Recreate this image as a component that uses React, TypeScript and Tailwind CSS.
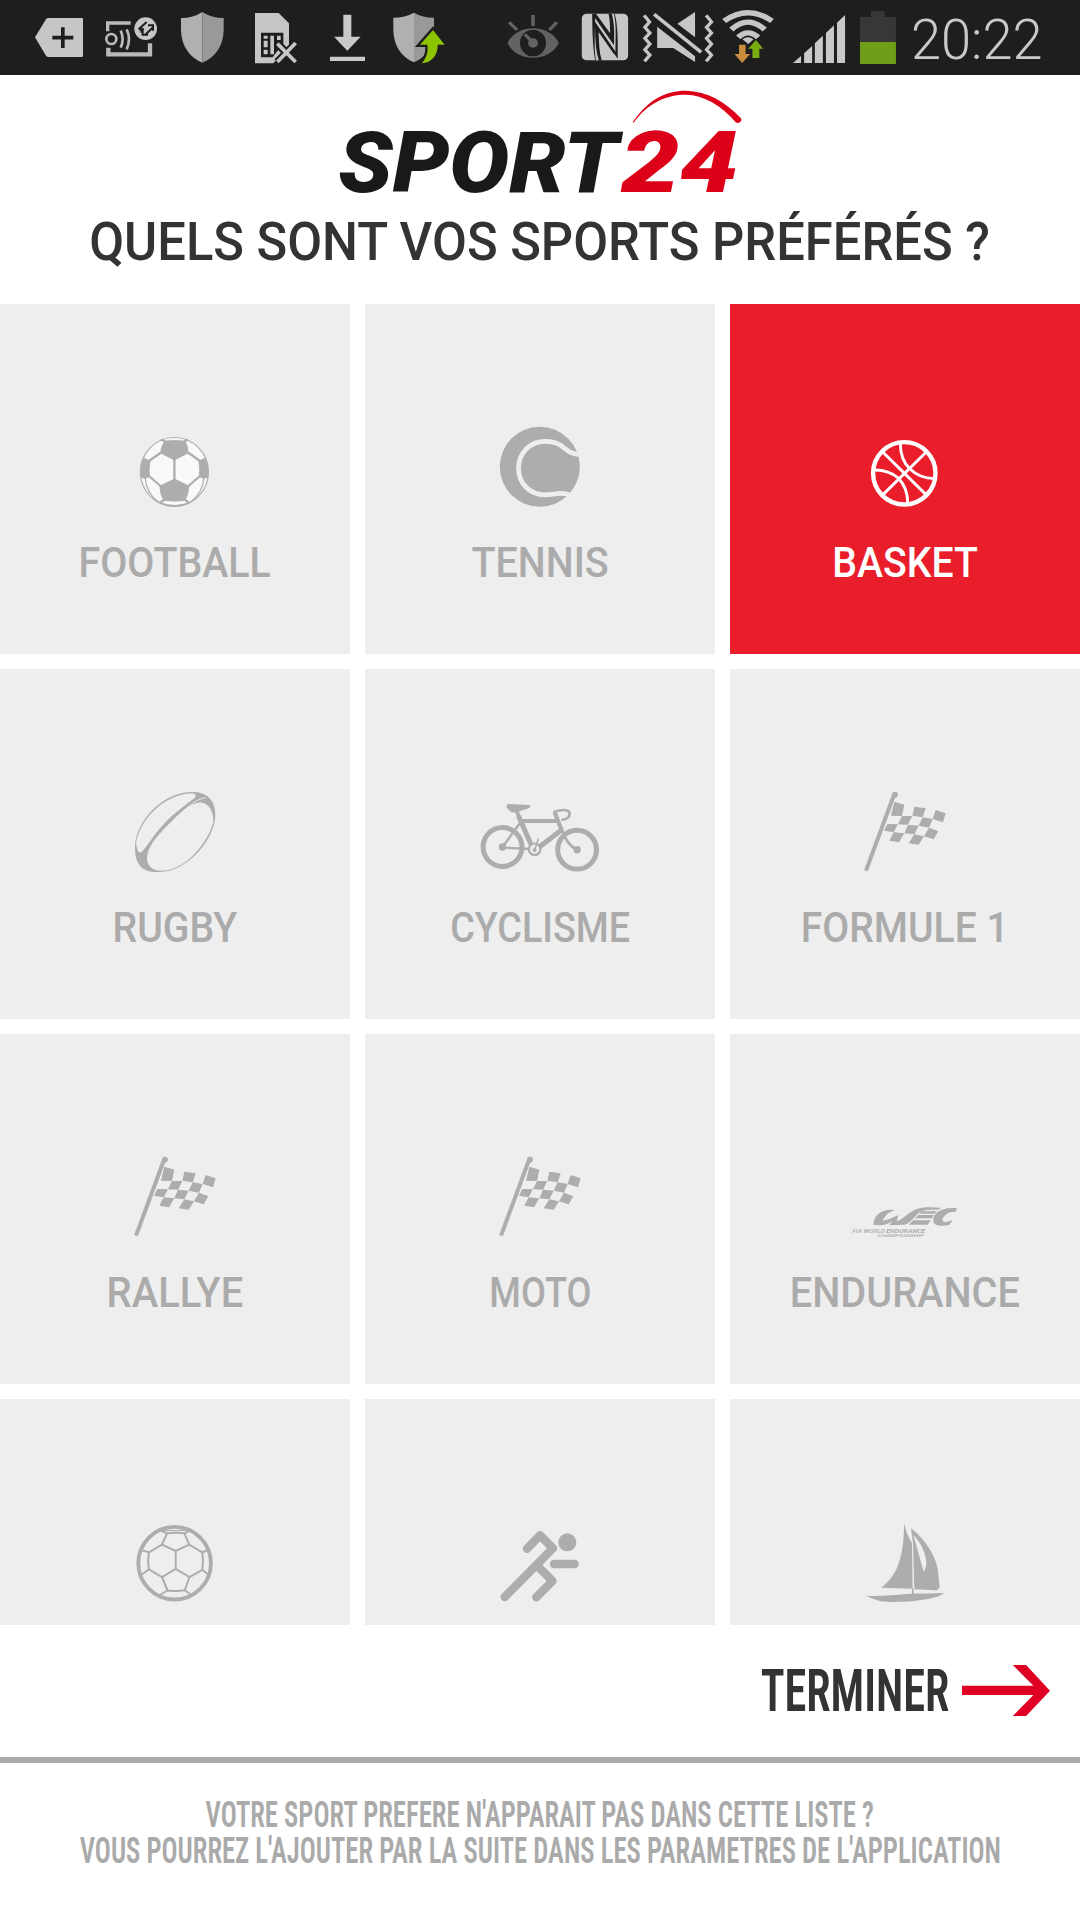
import React from 'react';

/* ---------- Status bar icons ---------- */

function LeftIcon({ x, w, children }: { x: number; w: number; children: React.ReactNode }) {
  return (
    <svg className="h-[75px] shrink-0" width={w} height={75} viewBox={`${x * 3} 0 ${w * 3} 225`}>
      {children}
    </svg>
  );
}

const RATIO = 600 / 1568;

function RightIcon({ x, w, children }: { x: number; w: number; children: React.ReactNode }) {
  return (
    <svg
      className="h-[75px] shrink-0"
      width={w}
      height={75}
      viewBox={`${(x - 480) / RATIO} 0 ${w / RATIO} 225`}
      preserveAspectRatio="none"
    >
      {children}
    </svg>
  );
}

function StatusBar() {
  return (
    <header className="flex h-[75px] items-center bg-[#1e1e1e] pl-[28px]">
      <LeftIcon x={28} w={66}>
        <path d="M105 112 L138 58 Q141 54 146 54 H245 Q249 54 249 58 V167 Q249 171 245 171 H146 Q141 171 138 167 Z" fill="#c6c6c6" />
        <path d="M157 113 H220 M188.500 82 V144" stroke="#1e1e1e" strokeWidth="11" />
      </LeftIcon>
      <LeftIcon x={94} w={75}>
        <g fill="none" stroke="#b9b9b9">
          <path d="M323 94 V69 H392" strokeWidth="10" />
          <path d="M325 143 V163 H450 V130" strokeWidth="13" />
          <circle cx="334" cy="117" r="15" strokeWidth="8" />
          <path d="M362 92 Q374 117 362 143 M380 88 Q394 117 380 148" strokeWidth="8" />
        </g>
        <circle cx="437" cy="86" r="34" fill="#c6c6c6" />
        <g stroke="#1e1e1e" strokeWidth="6" fill="none">
          <path d="M416 88 L440 66 M424 98 V82 M416 88 H432" />
          <path d="M434 106 L458 83 M444 76 H459 V92 M428 88 V104 H444" />
        </g>
      </LeftIcon>
      <LeftIcon x={169} w={70}>
        <path d="M607 36 Q580 54 543 54 V90 C544 140 570 172 607 188 Z" fill="#b0b0b0" />
        <path d="M607 36 Q635 54 671 54 V90 C670 140 645 172 607 188 Z" fill="#999999" />
      </LeftIcon>
      <LeftIcon x={239} w={74}>
        <path d="M765 39 H836 L867 70 V136 L820 190 H765 Z" fill="#c6c6c6" />
        <path d="M783 98 H850 V130 L818 172 H783 Z" fill="#1e1e1e" />
        <path d="M791 107 H803 V116 H791 Z M791 122 H803 V142 H791 Z M791 149 H803 V163 H791 Z M811 107 H822 V163 H811 Z M831 107 H842 V120 H831 Z" fill="#c6c6c6" />
        <path d="M832 131 L887 186 M887 131 L832 186" stroke="#1e1e1e" strokeWidth="24" />
        <path d="M832 131 L887 186 M887 129 L832 186" stroke="#c6c6c6" strokeWidth="11" />
      </LeftIcon>
      <LeftIcon x={313} w={67}>
        <path d="M1030 44 H1054 V110 H1082 L1042 152 L1002 110 H1030 Z M990 170 H1095 V183 H990 Z" fill="#c9c9c9" />
      </LeftIcon>
      <LeftIcon x={380} w={120}>
        <path d="M1242 38 Q1215 53 1180 53 V90 C1181 140 1206 172 1242 187 Z" fill="#b0b0b0" />
        <path d="M1242 38 Q1268 53 1302 53 V90 C1301 140 1278 172 1242 187 Z" fill="#999999" />
        <path
          d="M1299 90 L1334 134 H1313 C1314 164 1296 188 1265 190 C1281 172 1285 153 1282 134 H1260 Z"
          fill="#8cc400"
          stroke="#1e1e1e"
          strokeWidth="14"
          paintOrder="stroke"
        />
      </LeftIcon>
      <RightIcon x={500} w={70}>
        <path d="M72 129 C95 70 182 70 206 129 C182 188 95 188 72 129 Z" fill="#626262" />
        <ellipse cx="138.500" cy="129" rx="34" ry="40" fill="#1e1e1e" />
        <ellipse cx="138.500" cy="129" rx="13" ry="14" fill="#626262" />
        <path d="M117 103 L138 127 M138.500 45 V78 M76 67 L97 90 M201 67 L181 90" stroke="#626262" strokeWidth="9" />
      </RightIcon>
      <RightIcon x={570} w={66}>
        <rect x="266" y="41" width="121" height="140" rx="13" fill="#c6c6c6" />
        <path
          d="M293 41 H303 L340 100 C340 75 339 55 336 41 H352 C361 75 360 130 360 176 L310 96 C311 130 312 160 318 181 H301 C293 130 294 75 293 41 Z"
          fill="#1e1e1e"
        />
        <path d="M301 48 L347 124 C348 90 347 65 341 41 H350 C357 75 354 120 354 160 L304 78 C304 120 306 155 312 181 H303 C297 140 301 90 301 48 Z" fill="#c6c6c6" />
        <path d="M301 48 L347 124 C348 90 347 65 341 41 M353 160 L304 78 C304 120 306 155 314 181" fill="none" stroke="#1e1e1e" strokeWidth="7" />
      </RightIcon>
      <RightIcon x={636} w={80}>
        <g fill="none" stroke="#c6c6c6" strokeWidth="9">
          <path d="M429 46 L443 66 L431 82 L444 99 L431 115 L444 132 L431 149 L444 165 L430 184" />
          <path d="M591 46 L605 66 L592 82 L605 99 L592 115 L605 132 L592 149 L605 165 L591 184" />
        </g>
        <path d="M516 71 L562 36 V112 Z M463 80 L562 169 V186 L505 144 H463 Z" fill="#c6c6c6" />
        <path d="M455 43 L578 157" stroke="#c6c6c6" strokeWidth="10" />
      </RightIcon>
      <RightIcon x={716} w={68}>
        <g fill="none" stroke="#c6c6c6" strokeWidth="16">
          <path d="M638 63 Q700 13 763 63" />
          <path d="M657 89 Q700 44 744 89" />
          <path d="M675 112 Q700 85 727 112" />
        </g>
        <path d="M686 118 Q700 106 715 118 L701 132 Z" fill="#c6c6c6" />
        <path d="M677 134 H694 V162 H706 L685 189 L665 162 H677 Z" fill="#c98f3f" />
        <path d="M721 120 L740 146 H730 V174 H712 V146 H701 Z" fill="#78ad12" />
      </RightIcon>
      <RightIcon x={784} w={68}>
        <path
          d="M818 189 L839 168 V189 Z M847 160 L868 138 V189 H847 Z M875 130 L896 107 V189 H875 Z M904 99 L925 76 V189 H904 Z M933 68 L954 45 V189 H933 Z"
          fill="#c9c9c9"
        />
      </RightIcon>
      <RightIcon x={852} w={58}>
        <path d="M1022 33 H1058 V51 H1087 V126 H993 V51 H1022 Z" fill="#373737" />
        <path d="M993 126 H1087 V192 H993 Z" fill="#6f9f19" />
      </RightIcon>
      <span className="ml-[1px] mt-[5px] inline-block origin-left scale-x-[0.985] font-['Roboto',sans-serif] text-[55px] font-[350] leading-none text-[#c9c9c9]">
        20:22
      </span>
    </header>
  );
}

/* ---------- Brand ---------- */

function Logo() {
  return (
    <svg className="h-[130px] w-[440px] overflow-visible" viewBox="0 0 1320 390" fontFamily="Roboto, sans-serif" fontWeight="900" fontStyle="italic" fontSize="257">
      <text x="55" y="337" textLength="840" lengthAdjust="spacingAndGlyphs" fill="#1a181b">
        SPORT
      </text>
      <text x="903" y="337" textLength="352" lengthAdjust="spacingAndGlyphs" fill="#dd0019">
        24
      </text>
      <path
        d="M938 127 C985 57 1040 31 1100 32 C1160 34 1215 63 1263 115 C1268 124 1256 133 1247 127 C1205 76 1150 45 1098 44 C1040 44 985 67 941 128 Z"
        fill="#dd0019"
      />
    </svg>
  );
}

/* ---------- Sport pictograms ---------- */

function Pictogram({ children }: { children: React.ReactNode }) {
  return (
    <svg className="h-[84px] w-[130px] shrink-0" viewBox="110 120 130 84">
      {children}
    </svg>
  );
}

const INK = '#adadad';
const TILE = '#eeeeee';

function Football() {
  return (
    <Pictogram>
      <ellipse cx="174.400" cy="168" rx="34" ry="34.500" fill="#f9f9f9" stroke={INK} strokeWidth="1.200" />
      <g fill={INK} stroke={INK} strokeWidth="0.800">
        <path d="M164.900 137 Q174.400 136 184.800 137 Q188 142 188.200 149 L174.400 156 L160.600 149 Q161 142 164.900 137 Z" />
        <path d="M174.400 175 L189 182 Q188.500 190 185.100 196.300 Q174.400 198 163.700 196.300 Q160 190 159.900 182 Z" />
        <path d="M144.200 154.300 L150 157 Q148.500 165 149.500 172.700 L144.500 174.500 L140.700 173 Q139.500 163 144.200 154.300 Z" />
        <path d="M204.600 154.300 L198.800 157 Q200.300 165 199.300 172.700 L204.300 174.500 L208.100 173 Q209.300 163 204.600 154.300 Z" />
      </g>
      <g fill="none" stroke={INK} strokeWidth="2.300">
        <path d="M174.400 155 V176 M161 148.500 L149 157 M188 148.500 L200 157 M149 172 L160.500 182 M200 172 L188.500 182" />
        <path d="M165 137.500 L161 135.500 M184.500 137.500 L188 135.500 M164 196 L159.500 199 M185 196 L189.500 199" />
        <path d="M145 173 Q146 189 159 198.500 M204 173 Q203 189 190 198.500" strokeWidth="1.200" />
        <path d="M160 199 Q174.400 204.500 189 199" strokeWidth="1.400" />
      </g>
    </Pictogram>
  );
}

function Tennis() {
  return (
    <Pictogram>
      <circle cx="174.800" cy="162.700" r="40" fill={INK} />
      <path
        d="M218 150.600 C206 151 202 146 196 141.500 C191 138.500 186 137.400 180 137.400 C165 137.400 153.500 149 153.500 164.300 C153.500 179.500 165 190.800 180 190.800 C188 190.800 194 188.200 202 190 L210 193"
        fill="none"
        stroke={TILE}
        strokeWidth="4.800"
      />
    </Pictogram>
  );
}

function Basket() {
  return (
    <Pictogram>
      <g fill="none" stroke="#fff" strokeWidth="2.900">
        <circle cx="174.300" cy="169.300" r="31.200" strokeWidth="4.400" />
        <path d="M153 148.300 L196 190.600 M196 148.300 L153 190.600" />
        <path d="M170.300 139.500 Q170.500 156 179.700 164.700 Q190 174.500 204 174.600" />
        <path d="M145 166 Q159 166 168.500 174.200 Q177.700 184 177.700 199" />
      </g>
    </Pictogram>
  );
}

function Rugby() {
  return (
    <Pictogram>
      <path
        fillRule="evenodd"
        fill={INK}
        d="M190.700 123 C206 122.500 215.300 130 215.300 146 C215.300 170 187 203 160 203 C143 204 135 197 135 178 C135 155 160 124 190.700 123 Z
           M191.500 124.300 C197 125 196.500 127.500 194 129.500 C183 138 170 147 158.500 161 C151 170 143 184 140 183.500 C137.500 183 136 177 136.200 173 C140 152 162 126 191.500 124.300 Z
           M201 133.500 C190 132.500 176 148 166 158 C156 168 147 179 147 189 C147 197 152 201.500 161 201.800 C171 202 183 196.500 193 186.500 C204 175.500 212 161 213.400 152 C213.300 141 208 134 201 133.500 Z"
      />
      <path d="M206 128.500 C196 130 189 137 180 145" fill="none" stroke={TILE} strokeWidth="0.900" />
    </Pictogram>
  );
}

function Bicycle() {
  return (
    <Pictogram>
      <g fill="none" stroke={INK}>
        <circle cx="137.500" cy="178" r="19.400" strokeWidth="5" />
        <circle cx="212.100" cy="180.700" r="19.400" strokeWidth="5" />
        <path d="M151.400 141 L154 148" strokeWidth="3.800" />
        <path d="M153.500 147 L167 177.500 M196.500 161 L173 179" strokeWidth="5" />
        <path d="M156 152 H194" strokeWidth="4.200" />
        <path d="M189.500 143 L197 162" strokeWidth="4.200" />
        <path d="M197 161 Q202 176 211.500 180.500 M188.500 143 Q202 139 204.500 143.500 Q205.500 150 196.500 151" strokeWidth="2.600" />
        <path d="M137.500 178 L155 154 M137.500 178.500 L165 180" strokeWidth="2.300" />
      </g>
      <circle cx="169.600" cy="180.300" r="5.800" fill={TILE} stroke={INK} strokeWidth="2.200" />
      <path d="M169.600 181 L173.600 169.500" stroke={INK} strokeWidth="1.600" />
      <g fill={INK}>
        <circle cx="169.600" cy="181" r="2" />
        <circle cx="137.500" cy="178" r="3.700" />
        <circle cx="212.100" cy="180.700" r="3.700" />
        <path d="M143 135 L164.500 136 Q165.800 138 164 139.300 L152.500 142.700 Q148 144 146 143 L141.800 139 Q141 136 143 135 Z" />
      </g>
    </Pictogram>
  );
}

function Flag() {
  return (
    <Pictogram>
      <g transform="translate(50 101) scale(0.33333)" fill={INK}>
        <path d="M343 72 L258 302" stroke={INK} strokeWidth="12" />
        <circle cx="345" cy="74" r="8.500" />
        <path d="M343 95 L373 104 L366 138 L333 137 Z M403 110 L437 115 L428 142 L397 137 Z M467 120 L497 130 L489 157 L458 147 Z" />
        <path d="M366 138 H397 L384 164 L354 163 Z M428 142 L458 147 L447 173 L416 167 Z" />
        <path d="M322 162 L354 163 L341 187 L312 182 Z M384 164 L416 167 L403 193 L373 190 Z M447 173 L475 184 L461 208 L432 199 Z" />
        <path d="M341 187 L373 190 L357 217 L328 212 Z M403 193 L432 199 L416 224 L386 220 Z" />
      </g>
    </Pictogram>
  );
}

function Wec() {
  return (
    <Pictogram>
      <g transform="translate(50 146) scale(0.33333)" fill={INK}>
        <path d="M280 134 C282 105 305 84 346 90 C325 94 312 112 308 122 C320 122 338 112 357 105 C352 112 350 119 351 124 C370 116 385 98 405 89 C425 80 455 81 484 83 L475 89 C450 89 430 88 416 99 C400 112 393 130 372 134 L328 136 L336 124 C325 132 312 136 300 136 Z" />
        <path d="M425 94 H472 L463 101 H418 Z M415 105 H462 L455 115 H405 Z M400 121 H452 L443 134 H386 Z" />
        <path d="M531 85 L527 95 C510 94 498 100 490 112 C483 124 492 128 500 126 C508 124 512 121 518 121 L507 135 C490 138 465 140 460 125 C457 103 480 80 531 85 Z" />
        <g fontFamily="Roboto, sans-serif" fontStyle="italic" fontSize="14">
          <text x="217" y="158" textLength="98" lengthAdjust="spacingAndGlyphs" fontWeight="500">FIA WORLD</text>
          <text x="319" y="158" textLength="117" lengthAdjust="spacingAndGlyphs" fontWeight="700">ENDURANCE</text>
          <text x="292" y="171" textLength="140" lengthAdjust="spacingAndGlyphs" fontSize="11" fontWeight="500">CHAMPIONSHIP</text>
        </g>
      </g>
    </Pictogram>
  );
}

function Handball() {
  return (
    <Pictogram>
      <g fill="none" stroke={INK} strokeWidth="2">
        <circle cx="174.600" cy="164.200" r="36.300" strokeWidth="3.800" />
        <path d="M175.700 152 V170 M175.700 152 L162 145.700 L148.900 153.300 Q147.300 162 148.900 170.300 L162 178 L175.700 170 L189.500 178 L202.300 170.800 Q203.800 162 202.300 153.300 L189.200 145.700 Z" />
        <path d="M162 145.700 L167.100 134.300 Q175.700 133 184.400 134.300 L189.200 145.700 M162 178 L167.500 191.500 Q175.700 192.800 184.700 191.300 L189.500 178" />
        <path d="M167.100 134.300 L160 131.500 M184.400 134.300 L191 131 M148.900 153.300 L141 151 M202.300 153.300 L209 150.500 M148.900 170.500 L141 176 M202.300 170.800 L209 176.500 M167.500 191.500 L158 197 M184.700 191.300 L192 196.500" />
        <path d="M163 131.500 H188" strokeWidth="1" />
      </g>
    </Pictogram>
  );
}

function Runner() {
  return (
    <Pictogram>
      <circle cx="202.300" cy="143.300" r="9" fill={INK} />
      <g fill="none" stroke={INK} strokeWidth="8.400" strokeLinecap="round" strokeLinejoin="round">
        <path d="M189 165 H209.600" />
        <path d="M162 149.700 L175.100 136.300 L187.900 149.300 L139.700 198" />
        <path d="M173 167.500 L187.500 182 L171.300 198.300" />
      </g>
    </Pictogram>
  );
}

function Sailboat() {
  return (
    <Pictogram>
      <g transform="translate(10 101) scale(0.33333)" fill={INK}>
        <path d="M492 70 Q500 105 516 130 L518 266 L424 263 C475 225 492 165 492 70 Z" />
        <path
          fillRule="evenodd"
          d="M513 85 C570 130 597 190 596 235 L599 258 C598 268 592 271 585 271 L523 268 L519 130 Z M520 104 C545 130 558 165 559 185 C559 200 555 208 551 216 Z"
        />
        <path d="M516 266 H521 V284 H516 Z" />
        <path d="M378 287 C420 290 460 285 500 282 C540 280 580 280 612 279 C600 290 570 298 520 303 C470 307 425 307 410 300 Q390 294 378 287 Z" />
      </g>
    </Pictogram>
  );
}

/* ---------- Grid ---------- */

type Sport = { name: string; fit: string; Icon: () => React.ReactElement; active?: boolean };

const SPORTS: Sport[] = [
  { name: 'FOOTBALL', fit: 'scale-x-[0.937]', Icon: Football },
  { name: 'TENNIS', fit: 'scale-x-[0.938]', Icon: Tennis },
  { name: 'BASKET', fit: 'scale-x-[0.933]', Icon: Basket, active: true },
  { name: 'RUGBY', fit: 'scale-x-[0.933]', Icon: Rugby },
  { name: 'CYCLISME', fit: 'scale-x-[0.898]', Icon: Bicycle },
  { name: 'FORMULE 1', fit: 'scale-x-[0.931]', Icon: Flag },
  { name: 'RALLYE', fit: 'scale-x-[0.95]', Icon: Flag },
  { name: 'MOTO', fit: 'scale-x-[0.86]', Icon: Flag },
  { name: 'ENDURANCE', fit: 'scale-x-[0.944]', Icon: Wec },
  { name: 'HANDBALL', fit: 'scale-x-[0.937]', Icon: Handball },
  { name: 'ATHLÉTISME', fit: 'scale-x-[0.9]', Icon: Runner },
  { name: 'VOILE', fit: 'scale-x-[0.93]', Icon: Sailboat },
];

function Tile({ name, fit, Icon, active }: Sport) {
  return (
    <button
      type="button"
      className={`flex h-[350px] flex-col items-center ${active ? 'bg-[#ea1d2a] text-white' : 'bg-[#eeeeee] text-[#ababab]'}`}
    >
      <span className="flex h-[204px] items-end">
        <Icon />
      </span>
      <span className={`mt-[34px] whitespace-nowrap text-[42px] font-medium leading-[42px] ${fit}`}>{name}</span>
    </button>
  );
}

export default function App() {
  return (
    <div className="flex h-[1920px] w-[1080px] flex-col overflow-hidden bg-white font-['Roboto',sans-serif]">
      <StatusBar />
      <div className="flex h-[229px] flex-col items-center pt-[5px]">
        <Logo />
        <h1 className="mt-[5px] origin-center scale-x-[0.947] whitespace-nowrap text-[53.5px] font-medium leading-[54px] text-[#333333]">
          QUELS SONT VOS SPORTS PRÉFÉRÉS ?
        </h1>
      </div>
      <main className="grid h-[1321px] shrink-0 grid-cols-3 content-start gap-[15px] overflow-hidden">
        {SPORTS.map((s) => (
          <Tile key={s.name} {...s} />
        ))}
      </main>
      <div className="flex h-[132px] shrink-0 items-center justify-end pr-[30px]">
        <span className="origin-right scale-x-[0.739] whitespace-nowrap font-['Roboto_Condensed','Roboto',sans-serif] text-[60px] font-semibold leading-[60px] text-[#333333]">
          TERMINER
        </span>
        <svg className="mb-[1px] ml-[13px] h-[51px] w-[88px]" viewBox="665 495 265 153" fill="#e00024">
          <path d="M818 495 H858 L930 572 L858 648 H818 L880 585 H665 V557 H880 Z" />
        </svg>
      </div>
      <footer className="flex grow flex-col items-center border-t-[6px] border-[#aaaaaa] pt-[34px] font-['Roboto_Condensed','Roboto',sans-serif] text-[37px] font-semibold leading-[36px] text-[#aaaaaa]">
        <p className="scale-x-[0.7205] whitespace-nowrap">VOTRE SPORT PREFERE N'APPARAIT PAS DANS CETTE LISTE ?</p>
        <p className="scale-x-[0.7205] whitespace-nowrap">
          VOUS POURREZ L'AJOUTER PAR LA SUITE DANS LES PARAMETRES DE L'APPLICATION
        </p>
      </footer>
    </div>
  );
}
